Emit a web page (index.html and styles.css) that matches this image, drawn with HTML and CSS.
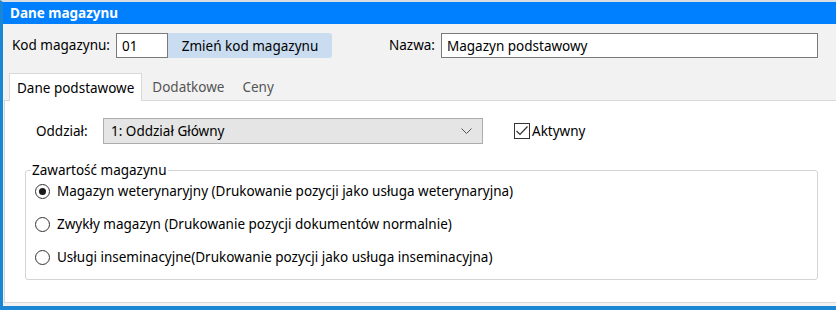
FILE: index.html
```html
<!DOCTYPE html>
<html lang="pl">
<head>
    <meta charset="UTF-8" />
    <title>Dane magazynu</title>
    <link rel="stylesheet" href="styles.css">
</head>
<body>

<div class="window">
    <!-- Title -->
    <div class="titlebar">Dane magazynu</div>

    <!-- Code and name -->
    <div class="header">
        <label class="code-label">Kod magazynu:</label>
        <input class="code-input" type="text" value="01">
        <button class="code-button">Zmień kod magazynu</button>
        <label class="name-label">Nazwa:</label>
        <input class="name-input" type="text" value="Magazyn podstawowy">
    </div>

    <!-- Tabs -->
    <div class="tabs">
        <div class="tab active">Dane podstawowe</div>
        <div class="tab">Dodatkowe</div>
        <div class="tab">Ceny</div>
    </div>

    <div class="panel">
        <div class="branch-row">
            <label class="branch-label">Oddział:</label>
            <div class="select">
                <span>1: Oddział Główny</span>
                <svg class="chevron" width="11" height="6" viewBox="0 0 11 6">
                    <path d="M0.5 0.5 L5.5 5.5 L10.5 0.5" fill="none" stroke="#555" stroke-width="1"/>
                </svg>
            </div>
            <label class="checkbox">
                <span class="box">
                    <svg width="14" height="14" viewBox="0 0 14 14">
                        <path d="M1.5 7 L5 10.5 L12.5 2.5" fill="none" stroke="#333" stroke-width="1.2"/>
                    </svg>
                </span>
                Aktywny
            </label>
        </div>

        <fieldset class="group">
            <legend>Zawartość magazynu</legend>
            <div class="radio-row"><span class="radio checked"></span>Magazyn weterynaryjny (Drukowanie pozycji jako usługa weterynaryjna)</div>
            <div class="radio-row"><span class="radio"></span>Zwykły magazyn (Drukowanie pozycji dokumentów normalnie)</div>
            <div class="radio-row"><span class="radio"></span>Usługi inseminacyjne(Drukowanie pozycji jako usługa inseminacyjna)</div>
        </fieldset>
    </div>
</div>

</body>
</html>
```

FILE: styles.css
```css
body {
    margin: 0;
    font-family: "Noto Sans", sans-serif;
    font-size: 13.5px;
    color: #000;
    background: #fff;
}

.window {
    height: 310px;
    box-sizing: border-box;
    border-top: 2px solid #d9dee4;
    border-left: 3px solid #1a86d4;
    border-bottom: 4px solid #1a86d4;
    background: #f2f2f2;
    display: flex;
    flex-direction: column;
}

.titlebar {
    height: 22px;
    line-height: 22px;
    padding-left: 7px;
    background: #0080ff;
    color: #fff;
    font-size: 13.5px;
    font-weight: bold;
}

.header {
    height: 49px;
    box-sizing: border-box;
    padding: 9px 0 0 9px;
    display: flex;
    align-items: flex-start;
}

.header label {
    line-height: 25px;
}

.code-label {
    width: 104px;
}

.name-label {
    width: 52px;
    margin-left: 57px;
}

input {
    font: inherit;
    height: 25px;
    box-sizing: border-box;
    border: 1px solid #7a7a7a;
    background: #fff;
    padding: 0 5px;
    outline: none;
}

.code-input {
    width: 52px;
}

.name-input {
    width: 377px;
}

.code-button {
    font: inherit;
    width: 164px;
    height: 25px;
    border: none;
    border-radius: 0 3px 3px 0;
    background: #c9dcf0;
    color: #000;
}

.tabs {
    height: 27px;
    padding-left: 6px;
    display: flex;
    align-items: flex-end;
    position: relative;
    z-index: 1;
}

.tab {
    height: 25px;
    line-height: 24px;
    padding: 0 9px;
    color: #555;
}

.tab.active {
    height: 28px;
    line-height: 28px;
    margin-bottom: -1px;
    margin-right: 1px;
    padding: 0 7px;
    box-sizing: border-box;
    background: #fff;
    color: #000;
    border: 1px solid #d9d9d9;
    border-bottom: none;
}

.panel {
    flex: 1;
    margin-left: 1px;
    background: #fff;
    border-top: 1px solid #d9d9d9;
    border-left: 1px solid #d9d9d9;
    border-bottom: 1px solid #d9d9d9;
    padding: 17px 0 0 31px;
    margin-bottom: 3px;
}

.branch-row {
    display: flex;
    align-items: center;
    height: 26px;
}

.branch-label {
    width: 67px;
}

.select {
    width: 380px;
    height: 26px;
    box-sizing: border-box;
    border: 1px solid #adadad;
    background: #e5e5e5;
    display: flex;
    align-items: center;
    justify-content: space-between;
    padding: 0 10px 0 7px;
}

.checkbox {
    display: flex;
    align-items: center;
    gap: 2px;
    margin-left: 31px;
}

.box {
    width: 16px;
    height: 16px;
    box-sizing: border-box;
    border: 1px solid #333;
    display: flex;
    align-items: center;
    justify-content: center;
}

.group {
    width: 793px;
    box-sizing: border-box;
    margin: 17px 0 0 -11px;
    padding: 0 0 11px 5px;
    border: 1px solid #d5d5d5;
    border-radius: 3px;
}

.group legend {
    padding: 0 1px;
    line-height: 19px;
}

.radio-row {
    height: 22px;
    display: flex;
    align-items: center;
    padding-left: 4px;
    margin-bottom: 11px;
}

.radio-row:last-child {
    margin-bottom: 0;
}

.radio {
    width: 15px;
    height: 15px;
    box-sizing: border-box;
    border: 1px solid #333;
    border-radius: 50%;
    margin-right: 7px;
    display: flex;
    align-items: center;
    justify-content: center;
}

.radio.checked::after {
    content: "";
    width: 7px;
    height: 7px;
    border-radius: 50%;
    background: #1a1a1a;
}
```
